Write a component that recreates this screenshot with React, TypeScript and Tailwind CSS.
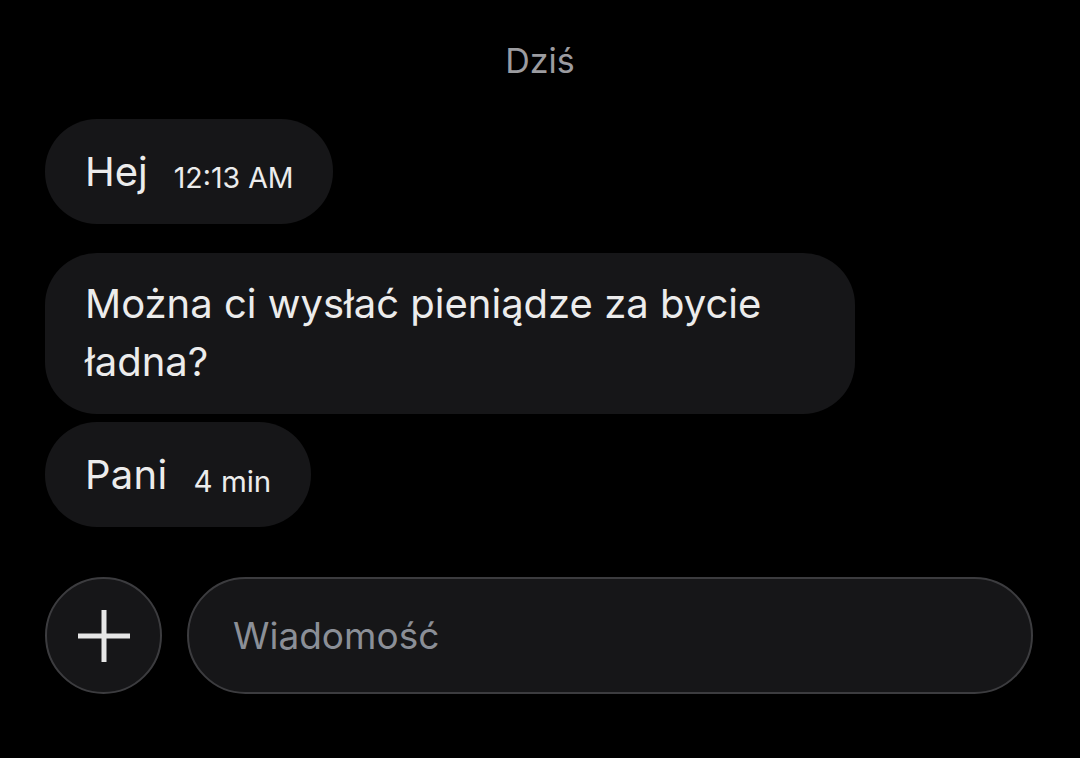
const font = { fontFamily: "Inter, Roboto, 'Noto Sans', sans-serif" };

function Bubble({ children, className = "" }: { children: React.ReactNode; className?: string }) {
  return (
    <div className={`self-start bg-[#161618] text-[#ececec] rounded-[52px] ${className}`}>{children}</div>
  );
}

export default function App() {
  return (
    <div className="w-[1080px] h-[758px] bg-black flex flex-col px-[45px] overflow-hidden" style={font}>
      <div className="text-center text-[#9c9ca0] text-[34px] leading-none pt-[44px] pb-[41px]">Dziś</div>

      <div className="flex flex-col">
        <Bubble className="h-[105px] pl-[40px] pr-[39px] flex items-center">
          <span className="text-[40px] leading-none">Hej</span>
          <span className="text-[28.5px] leading-none ml-[26px] mt-[14px]">12:13 AM</span>
        </Bubble>

        <Bubble className="mt-[29px] w-[810px] h-[161px] pl-[40px] pr-[40px] flex items-center rounded-[50px]">
          <p className="text-[40px] leading-[58px] -mt-[2px]">
            Można ci wysłać pieniądze za bycie
            <br />
            ładna?
          </p>
        </Bubble>

        <Bubble className="mt-[8px] h-[105px] pl-[40px] pr-[40px] flex items-center">
          <span className="text-[40px] leading-none tracking-[0.3px]">Pani</span>
          <span className="text-[29.5px] leading-none ml-[26px] mt-[14px]">4 min</span>
        </Bubble>
      </div>

      <div className="flex items-center gap-[25px] mt-[50px]">
        <button className="w-[117px] h-[117px] shrink-0 rounded-full border-2 border-[#3c3c3f] bg-[#161618] flex items-center justify-center text-[#e6e6e6]">
          <svg width="54" height="54" viewBox="0 0 54 54" fill="none" stroke="currentColor" strokeWidth="5">
            <path d="M27 1v52M1 27h52" />
          </svg>
        </button>
        <div className="w-[846px] h-[117px] rounded-full border-2 border-[#3c3c3f] bg-[#161618] flex items-center pl-[44px]">
          <span className="text-[37px] leading-none text-[#8b8f97]">Wiadomość</span>
        </div>
      </div>
    </div>
  );
}
